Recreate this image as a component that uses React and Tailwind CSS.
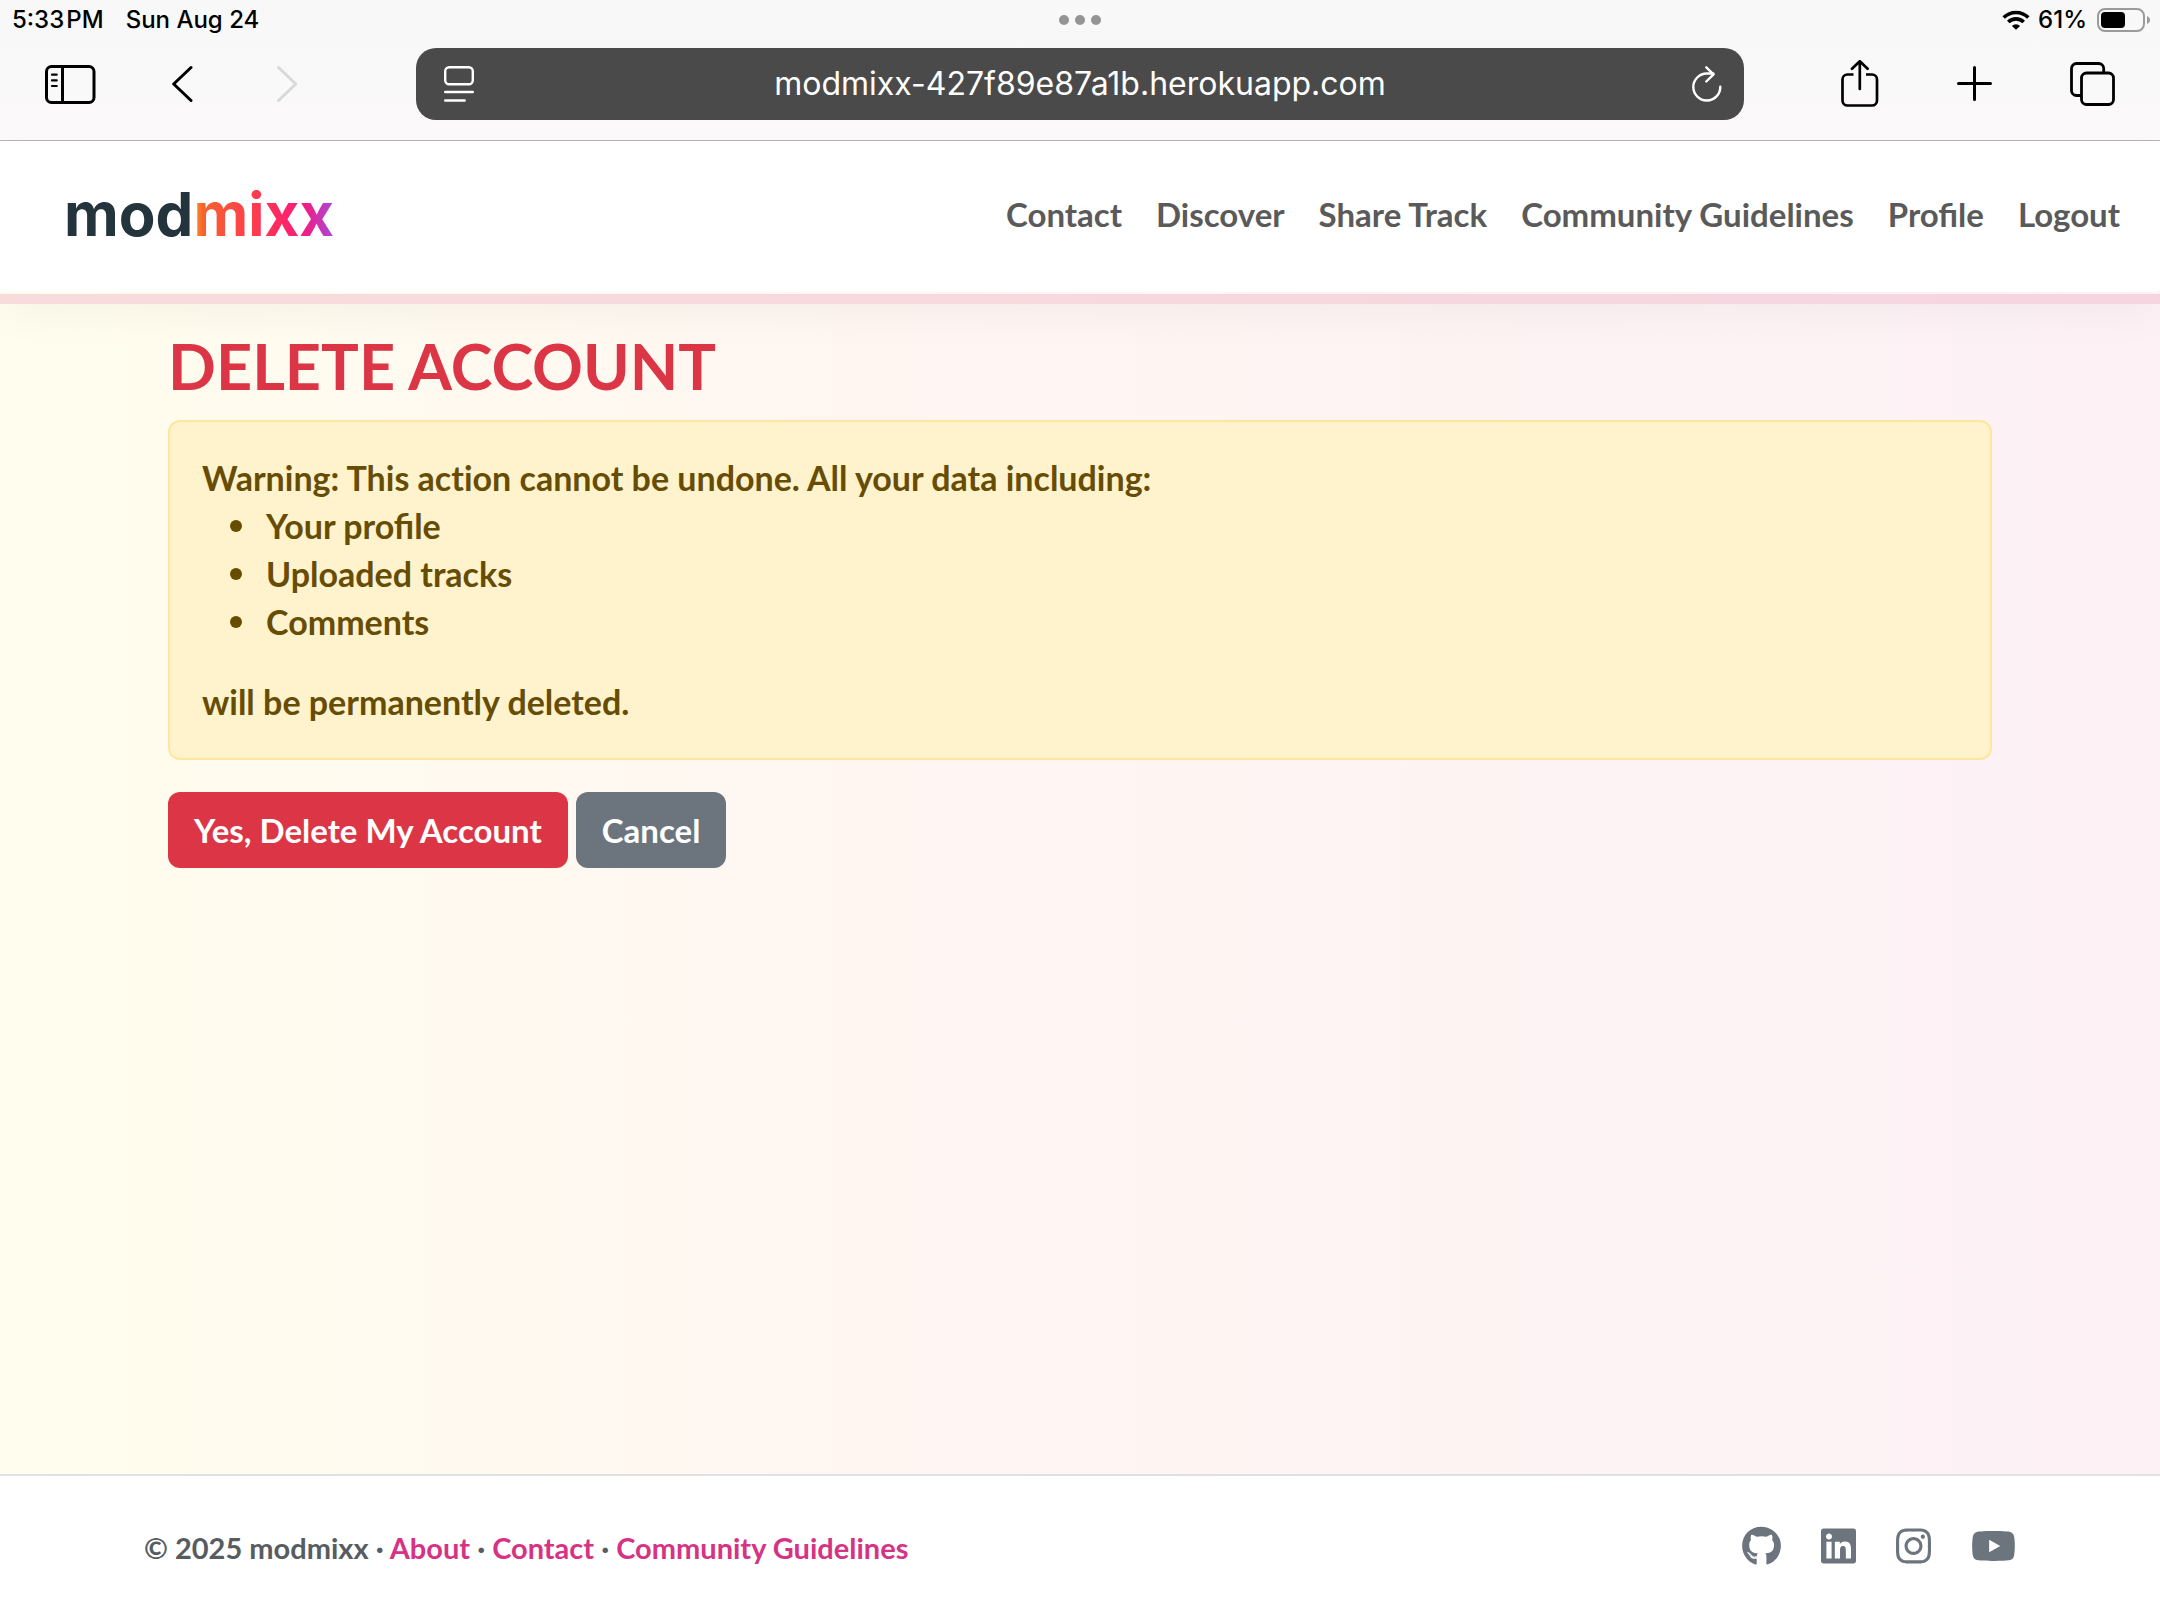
import { FaGithub, FaInstagram, FaLinkedin, FaYoutube } from "react-icons/fa6";

const navLinks = ["Contact", "Discover", "Share Track", "Community Guidelines", "Profile", "Logout"];
const footerLinks = ["About", "Contact", "Community Guidelines"];
const deletedItems = ["Your profile", "Uploaded tracks", "Comments"];
const socials = [
  { name: "GitHub", Icon: FaGithub, size: "w-[39px]" },
  { name: "LinkedIn", Icon: FaLinkedin, size: "w-[35px]" },
  { name: "Instagram", Icon: FaInstagram, size: "w-[35px]" },
  { name: "YouTube", Icon: FaYoutube, size: "w-[45px]" },
];

function StatusBar() {
  return (
    <div className="grid h-10 grid-cols-3 items-center px-2.5 text-[24px] font-medium leading-none text-black">
      <div className="flex gap-[22px] pl-0.5">
        <span>5:33{"\u200A"}PM</span>
        <span>Sun Aug 24</span>
      </div>
      <div className="flex justify-center gap-1.5">
        <span className="size-2.5 rounded-full bg-[#949494]" />
        <span className="size-2.5 rounded-full bg-[#949494]" />
        <span className="size-2.5 rounded-full bg-[#949494]" />
      </div>
      <div className="flex items-center justify-end gap-2">
        <svg className="h-5 w-7" viewBox="0 0 28 20" fill="none" stroke="#000" strokeWidth="3.6">
          <path d="M1.7 7.6a17.4 17.4 0 0 1 24.6 0" />
          <path d="M6.3 12.1a10.9 10.9 0 0 1 15.4 0" />
          <path d="M14 19.8 9.9 15.9a5.9 5.9 0 0 1 8.2 0Z" fill="#000" stroke="none" />
        </svg>
        <span>61%</span>
        <svg className="ml-0.5 h-6 w-[53px]" viewBox="0 0 53 24">
          <rect x="1" y="1" width="46" height="22" rx="7" fill="none" stroke="#9b9b9b" strokeWidth="2" />
          <rect x="4" y="4" width="24" height="16" rx="4" />
          <path d="M50 8c4 1.400 4 6.600 0 8Z" fill="#9b9b9b" />
        </svg>
      </div>
    </div>
  );
}

function Toolbar() {
  return (
    <div className="grid grid-cols-[416px_1fr_416px] items-center pb-5 pt-2">
      <div className="flex items-center gap-[76px] pl-11">
        <button aria-label="Show sidebar">
          <svg className="h-10 w-[52px]" viewBox="0 0 52 40" fill="none" stroke="#000" strokeLinecap="round">
            <rect x="2.500" y="2.500" width="47.500" height="36" rx="5" strokeWidth="3" />
            <path d="M18.500 2.500v36" strokeWidth="3" />
            <path d="M8 10.700h4.700M8 16.400h4.700M8 22h4.700" strokeWidth="2.200" />
          </svg>
        </button>
        <button aria-label="Back">
          <svg className="h-10 w-7" viewBox="0 0 28 40" fill="none" stroke="#000" strokeWidth="3" strokeLinecap="round" strokeLinejoin="round">
            <path d="M19 3.500 1.700 20 19 36.500" />
          </svg>
        </button>
        <button aria-label="Forward" disabled>
          <svg className="h-10 w-7" viewBox="0 0 28 40" fill="none" stroke="#d9d9d9" strokeWidth="3" strokeLinecap="round" strokeLinejoin="round">
            <path d="M2.500 3.500 19.800 20 2.500 36.500" />
          </svg>
        </button>
      </div>

      <div className="flex h-[72px] items-center rounded-[20px] bg-[#4a4a4a] pl-7 pr-[22px] text-white">
        <button aria-label="Page menu">
          <svg className="h-9 w-[30px]" viewBox="0 0 30 36" fill="none" stroke="#fff" strokeWidth="2.400" strokeLinecap="round">
            <rect x="1.200" y="1.200" width="27.600" height="17" rx="4" />
            <path d="M1.200 26h27.600M1.200 34.500h19.500" />
          </svg>
        </button>
        <input
          aria-label="Address"
          className="min-w-0 flex-1 bg-transparent pr-1.5 text-center text-[32px] outline-none"
          defaultValue="modmixx-427f89e87a1b.herokuapp.com"
        />
        <button aria-label="Reload">
          <svg className="h-9 w-[30px]" viewBox="0 0 30 36" fill="none" stroke="#fff" strokeWidth="2.400" strokeLinecap="round" strokeLinejoin="round">
            <path d="M28.300 20.700A13.500 13.500 0 1 1 14.800 7.500h6.500" />
            <path d="M14.300 1.300 21.500 8.300 14.300 15.500" />
          </svg>
        </button>
      </div>

      <div className="flex items-center justify-end gap-[76px] pr-11">
        <button aria-label="Share">
          <svg className="h-12 w-10" viewBox="0 0 40 48" fill="none" stroke="#000" strokeWidth="2.700" strokeLinecap="round" strokeLinejoin="round">
            <path d="M13.500 14.500H7.500a5 5 0 0 0-5 5v21a5 5 0 0 0 5 5h24.500a5 5 0 0 0 5-5v-21a5 5 0 0 0-5-5h-6" strokeLinecap="butt" />
            <path d="M19.800 29V1.500M12 8.700l7.800-7.500 7.800 7.500" />
          </svg>
        </button>
        <button aria-label="New tab">
          <svg className="h-9 w-[38px]" viewBox="0 0 38 36" fill="none" stroke="#000" strokeWidth="3" strokeLinecap="round">
            <path d="M2.500 17.500h32M18.500 1.500v32" />
          </svg>
        </button>
        <button aria-label="Show tabs">
          <svg className="h-11 w-[46px]" viewBox="0 0 46 44" fill="none" stroke="#000" strokeWidth="2.800">
            <path d="M33.700 10V6.500a5 5 0 0 0-5-5H6.500a5 5 0 0 0-5 5v22a5 5 0 0 0 5 5h4.500" />
            <rect x="11.500" y="11" width="32" height="31.500" rx="5" />
          </svg>
        </button>
      </div>
    </div>
  );
}

function SiteHeader() {
  return (
    <header className="shadow-[0_16px_40px_-4px_rgba(0,0,0,0.04)]">
      <div className="flex min-h-[151px] items-center justify-between rounded-b-sm bg-white pb-1.5 pl-16 pr-10">
        <a href="#" className="font-['Inter',sans-serif] text-[60px] font-bold leading-none text-[#24343d]">
          mod
          <span className="bg-[linear-gradient(90deg,#f9a01b_0%,#f7622f_7%,#fd3d4c_42%,#ff2468_66%,#ef1d85_80%,#a64be0_100%)] bg-clip-text text-transparent">mixx</span>
        </a>
        <nav className="flex gap-[34px] text-[33px] text-[#5a5a5a]">
          {navLinks.map((label) => (
            <a key={label} href="#">{label}</a>
          ))}
        </nav>
      </div>
      <div className="mt-0.5 h-2.5 bg-linear-to-r from-[#f8dcdc] to-[#f6d5e1]" />
    </header>
  );
}

function DeleteAccount() {
  return (
    <main className="mx-auto w-full max-w-[1824px] grow pt-[26px]">
      <h1 className="text-[63px] leading-[72px] text-[#dc3545]">DELETE ACCOUNT</h1>
      <div className="mt-[18px] rounded-xl border-2 border-[#ffe69c] bg-[#fff3cd] p-8 text-[#664d03]">
        <p className="[font-variant-ligatures:none]">Warning: This action cannot be undone. All your data including:</p>
        <ul className="mb-8 pl-7">
          {deletedItems.map((item) => (
            <li key={item} className="flex items-center gap-6 before:size-3 before:rounded-full before:bg-current">
              {item}
            </li>
          ))}
        </ul>
        <p>will be permanently deleted.</p>
      </div>
      <form className="mt-8 flex gap-2 text-[33px] text-white" onSubmit={(e) => e.preventDefault()}>
        <button type="submit" className="rounded-xl bg-[#dc3545] px-[26px] py-3.5">Yes, Delete My Account</button>
        <button type="button" className="rounded-xl bg-[#6c757d] px-[26px] py-3.5">Cancel</button>
      </form>
    </main>
  );
}

function SiteFooter() {
  return (
    <footer className="border-t-2 border-[#dee2e6] bg-white">
      <div className="mx-auto flex h-36 w-full max-w-[1872px] items-center justify-between">
        <p className="text-[29px] text-[#565c61]">
          © 2025 modmixx
          {footerLinks.map((label) => (
            <span key={label}>
              {" · "}
              <a href="#" className="text-[#d63384]">{label}</a>
            </span>
          ))}
        </p>
        <div className="flex items-center gap-10 pb-1 text-[#6c757d]">
          {socials.map(({ name, Icon, size }) => (
            <a key={name} href="#" aria-label={name}>
              <Icon className={`h-10 ${size}`} />
            </a>
          ))}
        </div>
      </div>
    </footer>
  );
}

export default function App() {
  return (
    <div className="flex min-h-screen flex-col bg-linear-to-r/srgb from-[#fffeee] via-[#fff5f2] via-45% to-[#fdf1f6] font-['Lato',sans-serif] text-[34px] font-bold leading-[48px]">
      <div className="border-b border-[#b4b4b4] bg-linear-to-b from-[#f8f8f8] to-[#fbf9f9] font-['Inter',sans-serif] font-normal">
        <StatusBar />
        <Toolbar />
      </div>
      <SiteHeader />
      <DeleteAccount />
      <SiteFooter />
    </div>
  );
}
